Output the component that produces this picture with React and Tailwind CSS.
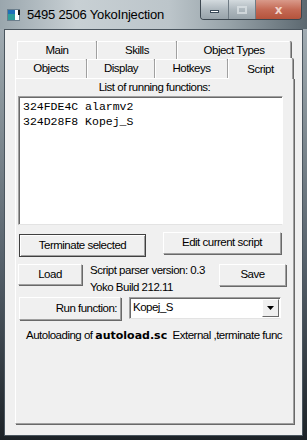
import React from 'react';

const ui = { fontFamily: '"Liberation Sans", Arial, sans-serif' };

function Tab({ label, w, selected }) {
  if (selected) {
    return (
      <div
        className={`${w} h-[21px] -mb-[1px] relative z-10 bg-[#f0f0f0] border-l border-t border-white rounded-tr-[2px] shadow-[1px_0_0_#696969] border-r border-r-[#a0a0a0] flex items-start justify-center pt-[2px]`}
      >
        {label}
      </div>
    );
  }
  return (
    <div
      className={`${w} h-full bg-[#f0f0f0] border-l border-t border-white border-r border-r-[#a0a0a0] shadow-[1px_0_0_#696969] rounded-tr-[2px] flex items-center justify-center`}
    >
      {label}
    </div>
  );
}

function Button({ children, className = '', isDefault }) {
  return (
    <div
      className={`${className} bg-[#f0f0f0] flex items-center ${
        isDefault
          ? 'border border-[#404040] shadow-[inset_1px_1px_0_#ffffff,inset_-1px_-1px_0_#a0a0a0]'
          : 'border-l border-t border-white border-r border-b border-r-[#a0a0a0] border-b-[#a0a0a0] shadow-[1px_1px_0_#696969]'
      }`}
    >
      {children}
    </div>
  );
}

export default function App() {
  return (
    <div
      className="w-[307px] h-[440px] flex flex-col overflow-hidden bg-[linear-gradient(180deg,#aab4bb_0%,#8e999f_20%,#55606a_60%,#1c2227_100%)]"
      style={ui}
    >
      {/* title bar */}
      <div className="h-[29px] flex items-start bg-[linear-gradient(90deg,#9aa6ad_0%,#c8d0d4_25%,#bcc5ca_55%,#96a2a8_75%,#5c6870_100%)]">
        <div className="flex items-center h-[30px] pl-[7px] gap-[6px]">
          <svg width="14" height="13" viewBox="0 0 14 13">
            <rect x="0.5" y="0.5" width="12" height="11" fill="#ffffff" stroke="#6b7e8c" />
            <rect x="1" y="1" width="7" height="10" fill="#2f9c9a" />
            <rect x="1" y="1" width="7" height="4" fill="#1f6fb8" />
            <rect x="11" y="1" width="2" height="5" fill="#1a1a1a" />
          </svg>
          <span className="text-[13px] tracking-[-0.2px] text-black">5495 2506 YokoInjection</span>
        </div>
        <div className="ml-auto mr-[5px] flex h-[20px] border border-[#3c4750] border-t-0 rounded-b-[4px] overflow-hidden">
          <div className="w-[28px] h-full flex items-center justify-center bg-[linear-gradient(180deg,#d3dade_0%,#aeb8be_50%,#98a3aa_100%)] border-r border-[#6f7b84]">
            <div className="w-[9px] h-[3px] bg-white border border-[#3a4a58] mt-[4px]" />
          </div>
          <div className="w-[27px] h-full flex items-center justify-center bg-[linear-gradient(180deg,#d3dade_0%,#aeb8be_50%,#98a3aa_100%)] border-r border-[#6f7b84]">
            <div className="w-[10px] h-[8px] border-2 border-[#dfe5e8] opacity-70" />
          </div>
          <div className="w-[45px] h-full flex items-center justify-center bg-[linear-gradient(180deg,#d99a8a_0%,#c46a55_50%,#b5533c_100%)]">
            <span className="text-[12px] font-bold text-[#f1d3c9]" style={{ fontFamily: '"DejaVu Sans", sans-serif' }}>
              x
            </span>
          </div>
        </div>
      </div>

      {/* client area */}
      <div className="flex-1 mx-[4px] mb-[4px] bg-[#f0f0f0] border border-[#4a555e] pl-[10px] pr-[8px] pt-[11px] pb-[11px] flex flex-col text-[11.5px] tracking-[-0.5px] text-black">
        <div className="flex h-[18px] ml-[2px]">
          <Tab label="Main" w="w-[80px]" />
          <Tab label="Skills" w="w-[80px]" />
          <Tab label="Object Types" w="w-[114px]" />
        </div>
        <div className="flex h-[19px] items-end">
          <Tab label="Objects" w="w-[72px]" />
          <Tab label="Display" w="w-[68px]" />
          <Tab label="Hotkeys" w="w-[73px]" />
          <Tab label="Script" w="w-[65px]" selected />
        </div>

        {/* tab page */}
        <div className="flex-1 border-l border-t border-white border-r border-b border-r-[#a0a0a0] border-b-[#a0a0a0] shadow-[1px_1px_0_#696969] flex flex-col">
          <div className="h-[16px] mt-[1px] flex items-center justify-center">List of running functions:</div>
          <div className="ml-[2px] w-[265px] h-[129px] bg-white border border-t-[#a0a0a0] border-l-[#a0a0a0] border-r-white border-b-[#e3e3e3] shadow-[inset_1px_1px_0_#696969] px-[4px] pt-[2px]">
            <div className="text-[11.5px] leading-[15px] tracking-normal text-black" style={{ fontFamily: '"Liberation Mono", "Courier New", monospace' }}>
              <div>324FDE4C alarmv2</div>
              <div>324D28F8 Kopej_S</div>
            </div>
          </div>

          <div className="flex items-start mt-[7px] h-[25px]">
            <Button isDefault className="ml-[3px] mt-[2px] w-[127px] h-[23px] justify-center">
              Terminate selected
            </Button>
            <Button className="ml-[17px] w-[118px] h-[22px] justify-center">Edit current script</Button>
          </div>

          <div className="flex items-start mt-[7px] h-[25px]">
            <Button className="ml-[2px] w-[64px] h-[21px] justify-center">Load</Button>
            <div className="ml-[8px] -mt-[2px] flex flex-col leading-[17px] whitespace-nowrap">
              <span>Script parser version: 0.3</span>
              <span>Yoko Build 212.11</span>
            </div>
            <Button className="ml-auto mr-[7px] w-[67px] h-[22px] justify-center">Save</Button>
          </div>

          <div className="flex items-start mt-[8px] h-[23px]">
            <Button className="ml-[3px] w-[102px] h-[23px] justify-end pr-[3px]">Run function:</Button>
            <div className="ml-[8px] w-[152px] h-[22px] bg-white border border-t-[#a0a0a0] border-l-[#a0a0a0] border-r-white border-b-[#e3e3e3] shadow-[inset_1px_1px_0_#696969] flex items-center pl-[3px]">
              <span className="flex-1">Kopej_S</span>
              <div className="w-[17px] h-[18px] mr-[1px] bg-[#f0f0f0] border-l border-t border-white border-r border-b border-r-[#696969] border-b-[#696969] flex items-center justify-center">
                <svg width="7" height="4" viewBox="0 0 7 4">
                  <path d="M0 0H7L3.5 4Z" fill="#000" />
                </svg>
              </div>
            </div>
          </div>

          <div className="mt-[8px] ml-[10px] h-[16px] flex items-center whitespace-nowrap">
            <span>Autoloading of&nbsp;</span>
            <span className="font-bold text-[11px] tracking-normal" style={{ fontFamily: '"DejaVu Sans", Verdana, sans-serif' }}>
              autoload.sc
            </span>
            <span>&nbsp; External ,terminate func</span>
          </div>
        </div>
      </div>
    </div>
  );
}
